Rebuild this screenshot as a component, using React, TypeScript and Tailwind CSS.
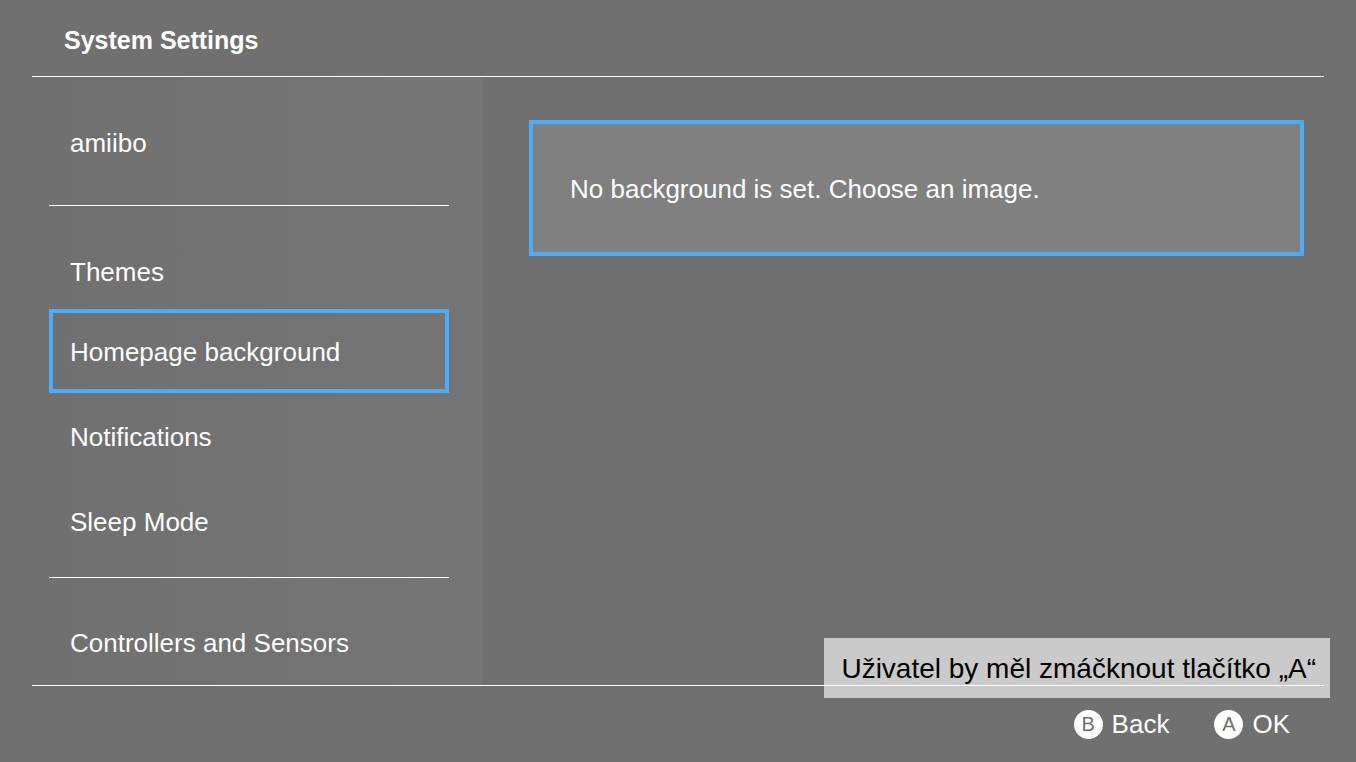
const item = "w-full border-4 px-[17px] text-left text-[26px] leading-8"

export default function App() {
  return (
    <div className="relative min-h-screen flex flex-col bg-[#707070] text-white font-['Liberation_Sans',Arial,sans-serif]">
      <header className="mx-8 h-[77px] pl-8 pt-1 flex items-center border-b border-white">
        <h1 className="text-[25px] leading-8 font-bold">System Settings</h1>
      </header>

      <main className="mx-8 flex-1 flex">
        {/* settings menu */}
        <nav className="w-[451px] shrink-0 pl-[17px] pr-[34px] pt-6 bg-linear-to-r from-[#707070] to-[#757575]">
          <button className={`${item} h-[84px] border-transparent`}>amiibo</button>
          <hr className="mt-5 mb-7 border-white" />
          <button className={`${item} h-[75px] border-transparent`}>Themes</button>
          <button className={`${item} h-[84px] pt-0.5 border-[#4dabf8]`}>Homepage background</button>
          <button className={`${item} mt-px h-[84px] pt-0.5 border-transparent`}>Notifications</button>
          <button className={`${item} mt-px h-[84px] pt-0.5 border-transparent`}>Sleep Mode</button>
          <hr className="mt-3.5 mb-6 border-white" />
          <button className={`${item} h-[82px] border-transparent`}>Controllers and Sensors</button>
        </nav>

        <section className="flex-1 pl-[46px] pr-5 pt-[43px]">
          <button className="w-full h-[136px] pt-0.5 border-4 border-[#4dabf8] bg-[#808080] px-[37px] text-left text-[26px] leading-8">
            No background is set. Choose an image.
          </button>
        </section>
      </main>

      <footer className="mx-8 h-[77px] pr-[34px] flex items-center justify-end gap-[45px] border-t border-white">
        <button className="flex items-center gap-[9px]">
          <span className="size-[29px] rounded-full bg-white text-xl leading-[29px] text-center text-[#707070]">B</span>
          <span className="text-[26px] leading-8">Back</span>
        </button>
        <button className="flex items-center gap-[9px]">
          <span className="size-[29px] rounded-full bg-white text-xl leading-[29px] text-center text-[#707070]">A</span>
          <span className="text-[26px] leading-8">OK</span>
        </button>
      </footer>

      {/* note over the footer line */}
      <div className="absolute right-[26px] bottom-16 h-[60px] pl-[17px] pr-3.5 pt-0.5 flex items-center bg-white/63">
        <p className="text-[28px] leading-8 text-black whitespace-nowrap">Uživatel by měl zmáčknout tlačítko „A“</p>
      </div>
    </div>
  )
}
